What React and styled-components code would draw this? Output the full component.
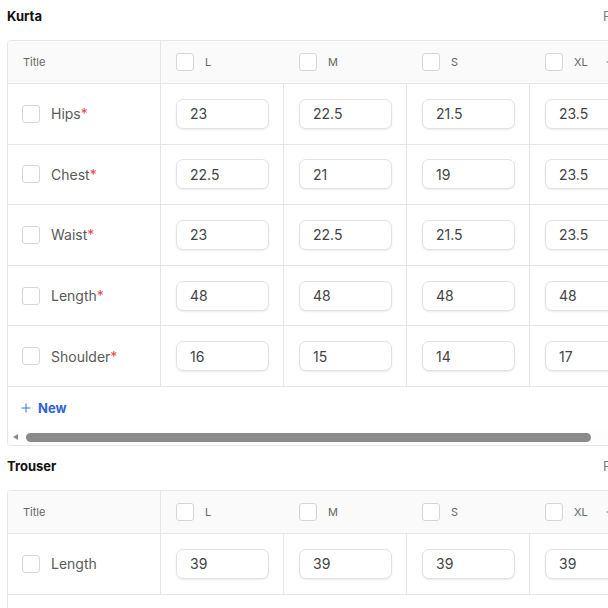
import React from 'react'
import styled, { createGlobalStyle } from 'styled-components'
import { Plus } from 'lucide-react'

const GlobalStyle = createGlobalStyle`
    html, body {
        margin: 0;
        padding: 0;
        background: #ffffff;
        overflow: hidden;
    }
    body {
        font-family: Inter, "Noto Sans", "Liberation Sans", sans-serif;
        color: #222;
    }
    * {
        box-sizing: border-box;
    }
`

const COLUMNS = '153px repeat(5, 123px)'

//#region styled components

const Page = styled.div`
    width: 701px;
    padding-left: 7px;
    display: flex;
    flex-direction: column;
    gap: 4px;
`

const Section = styled.section`
    display: flex;
    flex-direction: column;
`

const SectionHead = styled.div`
    height: 36px;
    margin-bottom: 4px;
    display: flex;
    align-items: center;
    justify-content: space-between;
    padding-bottom: 4px;
`

const SectionTitle = styled.h3`
    margin: 0;
    font-size: 13px;
    font-weight: 700;
    color: #111;
`

const SectionAction = styled.span`
    width: 98px;
    font-size: 13px;
    color: #7a7a7a;
`

const Card = styled.div`
    width: 690px;
    border: 1px solid #e6e6e6;
    border-radius: 4px;
    overflow: hidden;
    background: #fff;
`

const Row = styled.div`
    display: grid;
    grid-template-columns: ${COLUMNS};
    height: ${p => p.$header ? '43px' : '60.6px'};
    border-bottom: 1px solid #e6e6e6;
    background: ${p => p.$header ? '#fafafa' : '#fff'};
`

const Cell = styled.div`
    display: flex;
    align-items: center;
    gap: 11px;
    padding-left: ${p => p.$title ? '14px' : '15px'};
    border-right: ${p => p.$divider ? '1px solid #e6e6e6' : 'none'};
`

const HeadLabel = styled.span`
    font-size: 11px;
    color: #666;
`

const RowLabel = styled.span`
    font-size: 14px;
    color: #5a5a5a;
`

const Required = styled.span`
    color: #e5484d;
`

const Checkbox = styled.span`
    width: 18px;
    height: 18px;
    flex-shrink: 0;
    border: 1px solid #d6d6d6;
    border-radius: 3px;
    background: #fff;
`

const ValueInput = styled.input`
    width: 93px;
    height: 30px;
    padding: 0 0 0 13px;
    border: 1px solid #e2e2e2;
    border-radius: 7px;
    box-shadow: 0 1px 2px rgba(0, 0, 0, 0.08);
    font-family: inherit;
    font-size: 14px;
    color: #444;
    background: #fff;

    &:focus {
        outline: none;
    }
`

const AddColumn = styled.span`
    display: flex;
    margin-left: 5px;
    color: #3b6fdc;
`

const NewRow = styled.div`
    height: 43px;
    display: flex;
    align-items: center;
    gap: 5px;
    padding-left: 11px;
    color: #2f63d8;
    font-size: 13px;
    font-weight: 700;
`

const ScrollTrack = styled.div`
    height: 15px;
    display: flex;
    align-items: center;
    background: #fdfdfd;
`

const ScrollArrow = styled.span`
    width: 15px;
    display: flex;
    justify-content: center;

    &::before {
        content: '';
        border-style: solid;
        border-width: 3.5px 5px 3.5px 0;
        border-color: transparent #8c8c8c transparent transparent;
    }
`

const ScrollThumb = styled.span`
    width: 565px;
    height: 9px;
    margin-left: 3px;
    border-radius: 5px;
    background: #8a8a8a;
`

//#endregion

const sizes = ['L', 'M', 'S', 'XL']

const sections = [
    {
        name: 'Kurta',
        required: true,
        rows: [
            { title: 'Hips', values: ['23', '22.5', '21.5', '23.5'] },
            { title: 'Chest', values: ['22.5', '21', '19', '23.5'] },
            { title: 'Waist', values: ['23', '22.5', '21.5', '23.5'] },
            { title: 'Length', values: ['48', '48', '48', '48'] },
            { title: 'Shoulder', values: ['16', '15', '14', '17'] },
        ],
    },
    {
        name: 'Trouser',
        required: false,
        rows: [
            { title: 'Length', values: ['39', '39', '39', '39'] },
        ],
    },
]

function SizeTable({ section }) {
    return (
        <Card>
            <Row $header>
                <Cell $divider>
                    <HeadLabel>Title</HeadLabel>
                </Cell>
                {sizes.map((size, index) => (
                    <Cell key={size}>
                        <Checkbox />
                        <HeadLabel>{size}</HeadLabel>
                        {index == sizes.length - 1 && (
                            <AddColumn><Plus size={14} strokeWidth={1.6} /></AddColumn>
                        )}
                    </Cell>
                ))}
            </Row>

            {section.rows.map(row => (
                <Row key={row.title}>
                    <Cell $divider $title>
                        <Checkbox />
                        <RowLabel>
                            {row.title}
                            {section.required && <Required>*</Required>}
                        </RowLabel>
                    </Cell>
                    {row.values.map((value, index) => (
                        <Cell key={index} $divider>
                            <ValueInput defaultValue={value} />
                        </Cell>
                    ))}
                </Row>
            ))}

            <NewRow>
                <Plus size={14} strokeWidth={1.6} />
                New
            </NewRow>

            <ScrollTrack>
                <ScrollArrow />
                <ScrollThumb />
            </ScrollTrack>
        </Card>
    )
}

function App() {
    return (
        <>
            <GlobalStyle />
            <Page>
                {sections.map(section => (
                    <Section key={section.name}>
                        <SectionHead>
                            <SectionTitle>{section.name}</SectionTitle>
                            <SectionAction>Fill from chart</SectionAction>
                        </SectionHead>
                        <SizeTable section={section} />
                    </Section>
                ))}
            </Page>
        </>
    )
}

export default App
